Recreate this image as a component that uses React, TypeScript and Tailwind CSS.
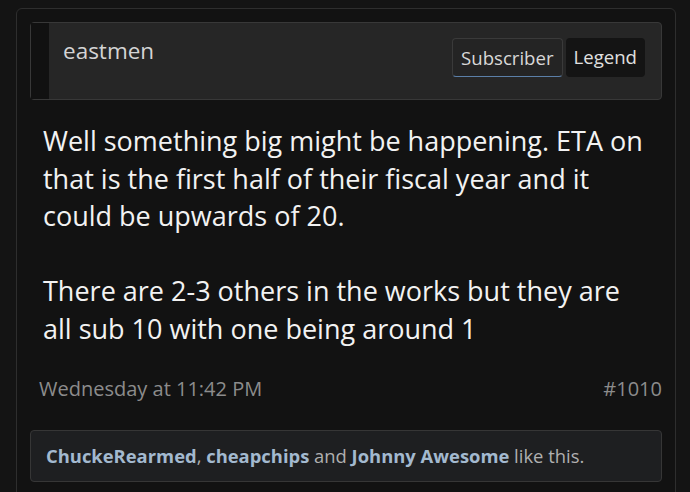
import React from 'react';

const likers = ['ChuckeRearmed', 'cheapchips', 'Johnny Awesome'];

export default function App() {
  return (
    <div className="h-[492px] w-[690px] overflow-hidden bg-[#141414] pl-4 pt-2 font-['Open_Sans',sans-serif]">
      <div className="h-[500px] w-[660px] rounded-t-md border border-[#2e2e2e] bg-[#121212] px-[13px] pt-[13px]">
        {/* author header */}
        <div className="flex h-[78px] rounded-sm border border-[#383838] bg-[#262626]">
          <div className="w-[18px] bg-[#111111]" />
          <div className="flex flex-1 items-start justify-between pl-[14px] pr-4 pt-[10px]">
            <span className="text-[22.5px] leading-[36px] text-[#d4d4d4]">eastmen</span>
            <div className="mt-[5px] flex gap-[3px]">
              <span className="rounded border border-[#3a3a3a] border-b-[#5b7fa8] bg-[#242424] px-[8px] text-[18.6px] leading-[37px] text-[#d8d8d8]">
                Subscriber
              </span>
              <span className="rounded bg-[#141414] px-2 text-[18.6px] leading-[37px] text-[#e0e0e0]">Legend</span>
            </div>
          </div>
        </div>

        {/* message */}
        <div className="px-[13px] pt-[22px] text-[27px] leading-[37.5px] text-[#f2f2f2]">
          Well something big might be happening. ETA on that is the first half of their fiscal year and it could be upwards of 20.
          <br />
          <br />
          There are 2-3 others in the works but they are all sub 10 with one being around 1
        </div>

        <div className="flex items-center justify-between pl-[9px] pt-[28px] text-[20px] leading-[28px] text-[#8c8c8c]">
          <span>Wednesday at 11:42 PM</span>
          <span>#1010</span>
        </div>

        {/* likes */}
        <div className="mt-[27px] flex h-[52px] items-center rounded-sm border border-[#363636] bg-[#1e1f21] px-[15px] text-[18.4px] text-[#b0b0b0]">
          {likers.map((name, i) => (
            <React.Fragment key={name}>
              <span className="font-bold text-[#a3b9cf]">{name}</span>
              {i === 0 && <span>,&nbsp;</span>}
              {i === 1 && <span>&nbsp;and&nbsp;</span>}
            </React.Fragment>
          ))}
          <span>&nbsp;like this.</span>
        </div>
      </div>
    </div>
  );
}
